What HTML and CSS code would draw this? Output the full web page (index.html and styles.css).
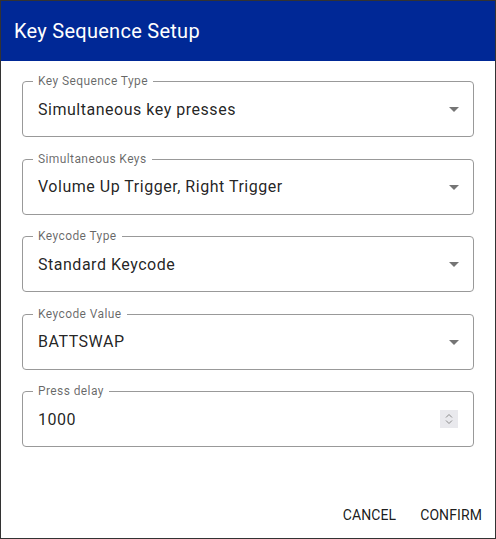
FILE: index.html
```html
<!DOCTYPE html>
<html>
<head>
<meta charset="utf-8">
<link rel="stylesheet" href="styles.css">
</head>
<body>
<div class="dialog">
  <div class="header"><h1 class="title">Key Sequence Setup</h1></div>
  <div class="content">
    <div class="field">
      <span class="label">Key Sequence Type</span>
      <span class="value">Simultaneous key presses</span>
      <svg class="arrow" width="24" height="24" viewBox="0 0 24 24"><path d="M7 10l5 5 5-5z"/></svg>
    </div>
    <div class="field">
      <span class="label">Simultaneous Keys</span>
      <span class="value">Volume Up Trigger, Right Trigger</span>
      <svg class="arrow" width="24" height="24" viewBox="0 0 24 24"><path d="M7 10l5 5 5-5z"/></svg>
    </div>
    <div class="field">
      <span class="label">Keycode Type</span>
      <span class="value">Standard Keycode</span>
      <svg class="arrow" width="24" height="24" viewBox="0 0 24 24"><path d="M7 10l5 5 5-5z"/></svg>
    </div>
    <div class="field">
      <span class="label">Keycode Value</span>
      <span class="value">BATTSWAP</span>
      <svg class="arrow" width="24" height="24" viewBox="0 0 24 24"><path d="M7 10l5 5 5-5z"/></svg>
    </div>
    <div class="field">
      <span class="label">Press delay</span>
      <span class="value">1000</span>
      <svg class="spin" width="18" height="18" viewBox="0 0 18 18"><rect width="18" height="18" fill="#e9e9ed"/><path d="M6 7.5l3-3 3 3M6 10.5l3 3 3-3" fill="none" stroke="#8a8a8a" stroke-width="1"/></svg>
    </div>
  </div>
  <div class="actions">
    <button class="btn">Cancel</button>
    <button class="btn">Confirm</button>
  </div>
</div>
</body>
</html>
```
FILE: styles.css
```css
* { box-sizing: border-box; }
html, body { margin: 0; padding: 0; background: #fff; }
body { font-family: Roboto, "Liberation Sans", sans-serif; }
.dialog {
  width: 496px;
  height: 539px;
  border: 1px solid #333;
  display: flex;
  flex-direction: column;
  background: #fff;
}
.header {
  height: 60px;
  background: #002896;
  display: flex;
  align-items: center;
  padding: 0 13px;
}
.title {
  margin: 0;
  font-size: 20px;
  font-weight: 400;
  color: #fff;
  letter-spacing: 0.27px;
}
.content {
  padding: 20px 21px 0;
  display: flex;
  flex-direction: column;
  gap: 21.5px;
}
.field {
  position: relative;
  height: 56px;
  border: 1px solid #999;
  border-radius: 4px;
  display: flex;
  align-items: center;
  padding: 0 14px 0 15px;
}
.label {
  position: absolute;
  left: 10px;
  top: -8px;
  padding: 0 5px;
  background: #fff;
  font-size: 12px;
  line-height: 14px;
  color: rgba(0,0,0,0.6);
  letter-spacing: 0.4px;
}
.value {
  flex: 1;
  font-size: 16px;
  color: rgba(0,0,0,0.87);
  letter-spacing: 0.52px;
}
.arrow { fill: rgba(0,0,0,0.54); margin-right: -7px; }
.spin { margin-right: 1px; }
.actions {
  margin-top: auto;
  display: flex;
  justify-content: flex-end;
  gap: 8px;
  padding: 0 5px 5px;
}
.btn {
  background: none;
  border: 0;
  height: 36px;
  padding: 6px 8px;
  font-family: Roboto, "Liberation Sans", sans-serif;
  font-size: 14px;
  font-weight: 400;
  text-transform: uppercase;
  letter-spacing: 0.1px;
  color: rgba(0,0,0,0.9);
}
```
